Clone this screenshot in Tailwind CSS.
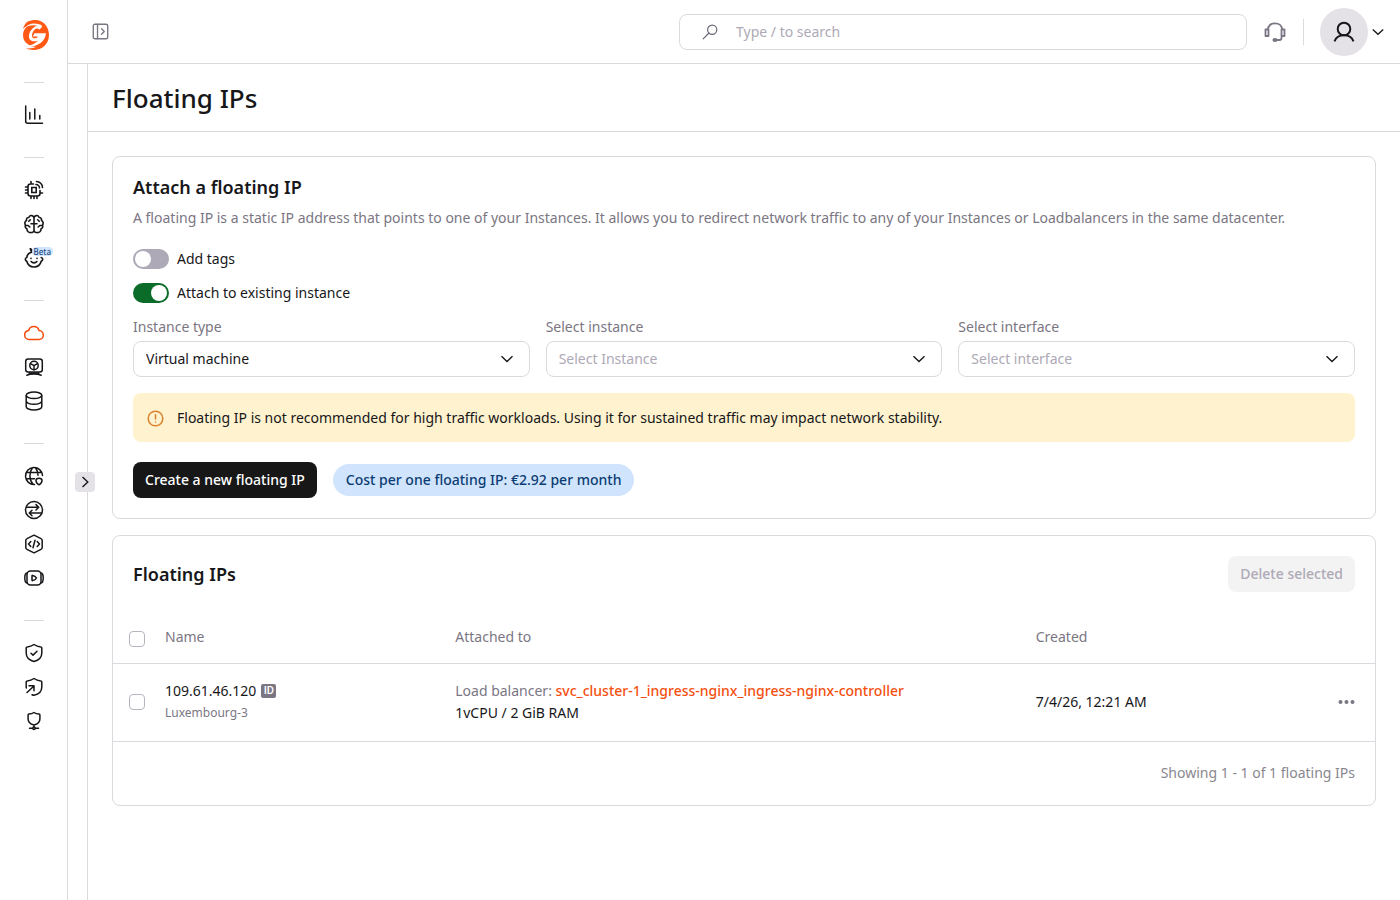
<!DOCTYPE html>
<html lang="en">
	<head>
		<meta charset="UTF-8" />
		<meta name="viewport" content="width=device-width, initial-scale=1.0" />
		<title>Floating IPs</title>
		<script src="https://cdn.jsdelivr.net/npm/@tailwindcss/browser@4"></script>
	</head>
	<body class="flex min-h-screen bg-white font-['Noto_Sans',sans-serif] text-sm leading-5 text-[#17171a]">
		<!-- Sidebar -->
		<nav aria-label="Products" class="flex w-17 shrink-0 flex-col items-center border-r border-[#dadade]">
			<a href="#" aria-label="Home" class="flex h-[82px] items-center pl-1 pb-3">
				<svg class="size-[30px]" viewBox="0 0 30 30">
					<path fill="#ff5913" d="M6 2C9 .500 12 0 14.500 0C22 0 28 6.500 28 15C28 24 21 30 12.500 30C9.500 30 7 29.500 5 28.300C9 28.800 13 28 16 26.500C13 27.300 9.500 26.500 6 23.500C3.500 21.500 2 19 2 15C2 11.500 3.500 8.500 6 6.500C4.500 6.500 3 7.500 2 9C2.500 6.500 4 3.500 6 2Z" />
					<path fill="#fff" d="M4 7.500C8 3 13 2.600 19 4.500C23 6 20 8 18.500 9.500C16 7.500 14 8.500 12.500 11C11 13.500 10.500 16 11.500 17.500C13 19 16 18.500 17 16.500H11.800L13.500 13.200H25C24.500 19.500 19.500 24.500 13 26C10 26.600 7 26.500 5 26C10 25.800 14.500 23.500 17.500 20.500C14 22 10 21.500 8.500 19C7 16 8.500 11.500 11.500 8.500C13 7 15 6 17 5.800C13 4.600 8 5 4 7.500Z" />
				</svg>
			</a>
			<hr class="mb-[15px] w-5 border-[#dadade]" />
			<a href="#" aria-label="Reports" class="flex h-[34px] items-center">
				<svg class="size-5" viewBox="0 0 20 20" fill="none" stroke="currentColor" stroke-width="1.5" stroke-linecap="round"><path d="M1.700 1v15.300a2 2 0 0 0 2 2H18.500M5.800 7.500V14M10.800 4v10M15.800 10.500V14" /></svg>
			</a>
			<hr class="mt-[25px] mb-[15px] w-5 border-[#dadade]" />
			<a href="#" aria-label="Edge AI" class="flex h-[34px] items-center">
				<svg class="size-5" viewBox="0 0 20 20" fill="none" stroke="currentColor" stroke-width="1.6" stroke-linecap="round"><path d="M9.500 4H6.500A2.500 2.500 0 0 0 4 6.500v7A2.500 2.500 0 0 0 6.500 16h7a2.500 2.500 0 0 0 2.500-2.500V10.500M7.800 7.500h4.400v5H7.800zM7 4V1.500M4 7H1.500M4 10H1.500M4 13H1.500M7 16v2.500M10 16v2.500M13 16v2.500M16 13h2.500M12.500 1.500a6 6 0 0 1 6 6M12 4.500a3.500 3.500 0 0 1 3.500 3.500" /></svg>
			</a>
			<a href="#" aria-label="Inference" class="flex h-[34px] items-center">
				<svg class="size-5" viewBox="0 0 20 20" fill="none" stroke="currentColor" stroke-width="1.6" stroke-linecap="round" stroke-linejoin="round"><path d="M10 4A2.600 2.600 0 0 0 5 3.200 2.800 2.800 0 0 0 2.500 6.500 3 3 0 0 0 1.500 11a3 3 0 0 0 1.500 4 3.300 3.300 0 0 0 4 3.500 2.500 2.500 0 0 0 3-2zM10 4A2.600 2.600 0 0 1 15 3.200a2.800 2.800 0 0 1 2.500 3.300A3 3 0 0 1 18.500 11a3 3 0 0 1-1.500 4 3.300 3.300 0 0 1-4 3.500 2.500 2.500 0 0 1-3-2M6.300 5.800 4.800 7.300M13.700 5.800l1.500 1.500M2 11.500h2.200L5.800 13M18 11.500h-2.200L14.200 13M7 9.800h6" /></svg>
			</a>
			<a href="#" aria-label="Everywhere AI" class="relative flex h-[34px] items-center">
				<svg class="size-5" viewBox="0 0 20 20" fill="none" stroke="currentColor" stroke-width="1.600" stroke-linecap="round" stroke-linejoin="round"><path d="M10 4.200C8 4.200 6.500 2.700 6.300.500 8 1.500 8.500 2.500 8 4 5 4.800 3 7 2.800 9.500c-2 .5-2 3 0 3.800C3.700 17 6.500 19 10 19s6.300-2 7.200-5.700c2-.8 2-3.300 0-3.800M7.200 13.500a3.500 3.500 0 0 0 5.600 0M7 10.200v.3M13 10.200v.3" /></svg>
				<span class="absolute top-[6px] left-2 rounded-full bg-[#d1e4fd] px-[2px] text-[8px] leading-[9px] font-medium text-[#1b4b85]">Beta</span>
			</a>
			<hr class="mt-[25px] mb-[15px] w-5 border-[#dadade]" />
			<a href="#" aria-label="Cloud" class="flex h-[34px] items-center text-[#f44a0c]">
				<svg class="size-5" viewBox="0 0 20 20" fill="none" stroke="currentColor" stroke-width="1.5" stroke-linejoin="round"><path d="M4.700 7.500A5.300 5.300 0 0 1 15 7.500a4.600 4.600 0 0 1 4.300 4.700 4.300 4.300 0 0 1-4.300 4.300H5A4.300 4.300 0 0 1 .7 12.200a4.600 4.600 0 0 1 4-4.700z" /></svg>
			</a>
			<a href="#" aria-label="Virtual instances" class="flex h-[34px] items-center">
				<svg class="size-5" viewBox="0 0 20 20" fill="none" stroke="currentColor" stroke-width="1.500" stroke-linecap="round" stroke-linejoin="round"><rect x="1.700" y="2" width="16.600" height="13" rx="2.500" /><circle cx="10" cy="8.500" r="4.200" /><path d="M10 8.700v4M10 8.700 6.600 6.700M10 8.700l3.400-2M2.800 18.300c3.500-1.600 10.900-1.600 14.400 0M5 16h10" /></svg>
			</a>
			<a href="#" aria-label="Storage" class="flex h-[34px] items-center">
				<svg class="size-5" viewBox="0 0 20 20" fill="none" stroke="currentColor" stroke-width="1.500"><ellipse cx="10" cy="4.300" rx="7.800" ry="3.300" /><path d="M2.200 4.300v11.400c0 1.800 3.500 3.300 7.800 3.300s7.800-1.500 7.800-3.300V4.300M2.200 10c0 1.800 3.500 3.300 7.800 3.300s7.800-1.500 7.800-3.300" /></svg>
			</a>
			<hr class="mt-[25px] mb-[15px] w-5 border-[#dadade]" />
			<a href="#" aria-label="DNS" class="flex h-[34px] items-center">
				<svg class="size-5" viewBox="0 0 20 20" fill="none" stroke="currentColor" stroke-width="1.500" stroke-linecap="round" stroke-linejoin="round"><path d="M18.500 9.500A8.500 8.500 0 1 0 10.500 18.500M2.500 6.500h15M2 12.800h8.500M8.500 1.700c-3.500 4.500-3.500 12 .5 16.600M11.500 1.700c1.700 2.300 2.500 4.800 2.500 7.500M15 18.800c-2-1.200-3-2.300-3-4.300 0-1.300 1.400-2.300 3-2.300s3 1 3 2.300c0 2-1 3.100-3 4.300z" /></svg>
			</a>
			<a href="#" aria-label="CDN" class="flex h-[34px] items-center">
				<svg class="size-5" viewBox="0 0 20 20" fill="none" stroke="currentColor" stroke-width="1.500" stroke-linecap="round" stroke-linejoin="round"><circle cx="10" cy="10" r="8.500" /><path d="M2.500 7.300H14.500M12 4.600l2.700 2.700L12 10M17.500 13H5.500M8 10.300 5.300 13 8 15.700" /></svg>
			</a>
			<a href="#" aria-label="FastEdge" class="flex h-[34px] items-center">
				<svg class="size-5" viewBox="0 0 20 20" fill="none" stroke="currentColor" stroke-width="1.500" stroke-linecap="round" stroke-linejoin="round"><path d="M10 1.200 17 4.600a2 2 0 0 1 1.200 1.800v7.200a2 2 0 0 1-1.200 1.800l-7 3.400-7-3.400a2 2 0 0 1-1.200-1.800V6.400A2 2 0 0 1 3 4.600zM6.800 7.500 4.500 10l2.300 2.500M13.200 7.500l2.300 2.500-2.300 2.500M11 6.300 9 13.700" /></svg>
			</a>
			<a href="#" aria-label="Streaming" class="flex h-[34px] items-center">
				<svg class="size-5" viewBox="0 0 20 20" fill="none" stroke="currentColor" stroke-width="1.500" stroke-linecap="round" stroke-linejoin="round"><rect x="3" y="3" width="14" height="14" rx="3.500" /><path d="M3 5C1.200 5.200.8 6.500.8 10S1.200 14.800 3 15M17 5c1.800.2 2.200 1.500 2.200 5s-.4 4.800-2.200 5M8 7.800v4.400c0 .3.300.5.600.4 1.700-.3 3.200-1.300 3.900-2.600-.7-1.300-2.200-2.300-3.900-2.600-.3-.1-.6.100-.6.400z" /></svg>
			</a>
			<hr class="mt-[25px] mb-[15px] w-5 border-[#dadade]" />
			<a href="#" aria-label="WAAP" class="flex h-[34px] items-center">
				<svg class="size-5" viewBox="0 0 20 20" fill="none" stroke="currentColor" stroke-width="1.500" stroke-linecap="round" stroke-linejoin="round"><path d="M10 1.500c2 1.500 4.500 2.300 6.800 2.400a1 1 0 0 1 1 1V10c0 4.300-3.200 7.300-7.800 8.500C5.400 17.300 2.200 14.300 2.200 10V4.900a1 1 0 0 1 1-1C5.500 3.800 8 3 10 1.500zM7 10.300l2 1.800 4-3.800" /></svg>
			</a>
			<a href="#" aria-label="DDoS protection" class="flex h-[34px] items-center">
				<svg class="size-5" viewBox="0 0 20 20" fill="none" stroke="currentColor" stroke-width="1.500" stroke-linecap="round" stroke-linejoin="round"><path d="M2.300 11C2.200 10 2.200 9 2.200 4.900a1 1 0 0 1 1-1C5.500 3.800 8 3 10 1.500c2 1.500 4.500 2.300 6.800 2.400a1 1 0 0 1 1 1V10c0 4.300-3.200 7.300-7.800 8.300-.8-.1-1.500-.4-2-.6M3 15.500l6.500-6M5 8.800h5v5" /></svg>
			</a>
			<a href="#" aria-label="Network security" class="flex h-[34px] items-center">
				<svg class="size-5" viewBox="0 0 20 20" fill="none" stroke="currentColor" stroke-width="1.500" stroke-linecap="round" stroke-linejoin="round"><path d="M10 1.500c1.500 1 3.200 1.500 5 1.600a1 1 0 0 1 .9 1V8c0 3.200-2.300 5.200-5.900 5.900C6.400 13.200 4.100 11.200 4.100 8V4.100a1 1 0 0 1 .9-1c1.800-.1 3.500-.6 5-1.600zM10 14v2M5.500 17.200h3M11.500 17.200h3" /><circle cx="10" cy="17.200" r="1.200" /></svg>
			</a>
		</nav>

		<div class="flex min-w-0 flex-1 flex-col">
			<!-- Top bar -->
			<header class="flex h-16 items-center justify-between border-b border-[#dadade] pr-4 pl-6">
				<button type="button" aria-label="Expand menu" class="text-[#7b7683]">
					<svg class="size-[17px]" viewBox="0 0 16 16" fill="none" stroke="currentColor" stroke-width="1.300" stroke-linecap="round" stroke-linejoin="round"><rect x="1.200" y="1.200" width="13.600" height="13.600" rx="1.500" /><path d="M5.200 1.200v13.600M9 5.500 11.500 8 9 10.500" /></svg>
				</button>
				<div class="flex items-center">
					<label class="flex h-9 w-[568px] items-center rounded-lg border border-[#dadade] pl-[22px]">
						<svg class="size-4 shrink-0 text-[#6b6675]" viewBox="0 0 16 16" fill="none" stroke="currentColor" stroke-width="1.200" stroke-linecap="round"><circle cx="10.200" cy="5.800" r="4.600" /><path d="M7 9 1.200 14.800" /></svg>
						<input type="search" aria-label="Search" placeholder="Type / to search" class="ml-[18px] min-w-0 flex-1 pt-px outline-none placeholder:text-[#aea9b6]" />
					</label>
					<button type="button" aria-label="Support" class="ml-[17px] text-[#7b7683]">
						<svg class="block size-[22px]" viewBox="0 0 22 22" fill="none" stroke="currentColor" stroke-width="1.800" stroke-linejoin="round"><path d="M4 8.500C4 4.800 7 2.300 11 2.300s7 2.500 7 6.200M1.500 8.500H4.500v6.500H1.500zM17.500 8.500h3v6.500h-3zM17.500 15v2c0 1.500-.8 2-2 2H12.500" /><ellipse cx="11" cy="19" rx="1.700" ry="1.200" fill="currentColor" /></svg>
					</button>
					<div class="ml-[17px] h-[26px] w-px bg-[#dadade]"></div>
					<button type="button" aria-label="Account" class="ml-4 flex items-center gap-1">
						<span class="flex size-12 items-center justify-center rounded-full bg-[#e4e1e7]">
							<svg class="size-6" viewBox="0 0 24 24" fill="none" stroke="currentColor" stroke-width="2"><circle cx="12" cy="9" r="6.300" /><path d="M2.500 21.300C4 17 7.500 15.200 12 15.200s8 1.800 9.500 6.100" /></svg>
						</span>
						<svg class="h-3 w-3" viewBox="0 0 12 12" fill="none" stroke="currentColor" stroke-width="1.300"><path d="M.8 3.500 6 8.300l5.200-4.800" /></svg>
					</button>
				</div>
			</header>

			<div class="flex flex-1">
				<!-- Collapsed submenu -->
				<aside class="relative w-5 shrink-0 border-r border-[#dadade]">
					<button type="button" aria-label="Open submenu" class="absolute top-[408px] left-[7px] flex size-5 items-center justify-center rounded bg-[#e4e1e7]">
						<svg class="h-3 w-3" viewBox="0 0 12 12" fill="none" stroke="currentColor" stroke-width="1.400"><path d="M3.500 1 8.800 6 3.500 11" /></svg>
					</button>
				</aside>

				<main class="min-w-0 flex-1">
					<div class="flex h-17 items-center border-b border-[#dadade] px-6">
						<h1 class="text-[26px] leading-8 font-medium">Floating IPs</h1>
					</div>

					<div class="flex flex-col gap-4 p-6">
						<!-- Attach form -->
						<section class="rounded-lg border border-[#dadade] p-5">
							<h2 class="text-lg leading-[21px] font-semibold">Attach a floating IP</h2>
							<p class="mt-[10px] text-[#7b7683]">
								A floating IP is a static IP address that points to one of your Instances. It allows you to redirect network traffic to any of your Instances or Loadbalancers in the same datacenter.
							</p>
							<div class="mt-[21px] flex flex-col items-start gap-[14px]">
								<label class="flex items-center gap-2">
									<input type="checkbox" role="switch" class="h-5 w-9 appearance-none rounded-full bg-[#aea9b6] p-[2px] before:block before:size-4 before:rounded-full before:bg-white checked:bg-[#0b6b28] checked:before:translate-x-4" />
									Add tags
								</label>
								<label class="flex items-center gap-2">
									<input type="checkbox" role="switch" checked class="h-5 w-9 appearance-none rounded-full bg-[#aea9b6] p-[2px] before:block before:size-4 before:rounded-full before:bg-white checked:bg-[#0b6b28] checked:before:translate-x-4" />
									Attach to existing instance
								</label>
							</div>
							<div class="mt-[14px] grid grid-cols-3 gap-4">
								<div>
									<label for="instanceType" class="block text-[#7b7683]">Instance type</label>
									<div class="relative mt-1">
										<select id="instanceType" class="h-9 w-full appearance-none rounded-lg border border-[#dadade] px-3">
											<option>Virtual machine</option>
										</select>
										<svg class="pointer-events-none absolute top-3 right-[17px] size-3" viewBox="0 0 12 12" fill="none" stroke="currentColor" stroke-width="1.400"><path d="M.5 3.300 6 8.500l5.500-5.200" /></svg>
									</div>
								</div>
								<div>
									<label for="instance" class="block text-[#7b7683]">Select instance</label>
									<div class="relative mt-1">
										<select id="instance" class="h-9 w-full appearance-none rounded-lg border border-[#dadade] px-3 text-[#aea9b6]">
											<option>Select Instance</option>
										</select>
										<svg class="pointer-events-none absolute top-3 right-[17px] size-3" viewBox="0 0 12 12" fill="none" stroke="currentColor" stroke-width="1.400"><path d="M.5 3.300 6 8.500l5.500-5.200" /></svg>
									</div>
								</div>
								<div>
									<label for="interface" class="block text-[#7b7683]">Select interface</label>
									<div class="relative mt-1">
										<select id="interface" class="h-9 w-full appearance-none rounded-lg border border-[#dadade] px-3 text-[#aea9b6]">
											<option>Select interface</option>
										</select>
										<svg class="pointer-events-none absolute top-3 right-[17px] size-3" viewBox="0 0 12 12" fill="none" stroke="currentColor" stroke-width="1.400"><path d="M.5 3.300 6 8.500l5.500-5.200" /></svg>
									</div>
								</div>
							</div>
							<div class="mt-4 flex h-[49px] items-center gap-3 rounded-lg bg-[#fff2ce] px-3">
								<svg class="size-5 shrink-0 text-[#d9832f]" viewBox="0 0 20 20" fill="none" stroke="currentColor" stroke-width="1.500" stroke-linecap="round"><circle cx="10.500" cy="10.500" r="7.300" /><path d="M10.500 6.800v4.200M10.500 13.900v.1" /></svg>
								<p>Floating IP is not recommended for high traffic workloads. Using it for sustained traffic may impact network stability.</p>
							</div>
							<div class="mt-5 flex items-center gap-4">
								<button type="button" class="h-9 rounded-lg bg-[#171717] px-3 font-medium text-white">Create a new floating IP</button>
								<span class="rounded-full bg-[#d1e4fd] px-[13px] py-[6px] font-medium text-[#0b3d73]">Cost per one floating IP: €2.92 per month</span>
							</div>
						</section>

						<!-- List -->
						<section class="rounded-lg border border-[#dadade]">
							<div class="flex items-center justify-between p-5">
								<h2 class="text-lg leading-6 font-semibold">Floating IPs</h2>
								<button type="button" disabled class="h-9 rounded-lg bg-[#f3f3f3] px-3 font-medium text-[#aea9b6]">Delete selected</button>
							</div>
							<table class="w-full table-fixed text-left">
								<thead>
									<tr class="h-[51px] border-b border-[#dadade] text-[#7b7683]">
										<th class="w-[52px] pt-1 pl-4"><input type="checkbox" aria-label="Select all" class="block size-4 appearance-none rounded border border-[#b9b5c0]" /></th>
										<th class="w-[23%] font-normal">Name</th>
										<th class="w-[46%] font-normal">Attached to</th>
										<th class="font-normal">Created</th>
										<th class="w-16"></th>
									</tr>
								</thead>
								<tbody>
									<tr class="h-[78px] border-b border-[#dadade]">
										<td class="pl-4"><input type="checkbox" aria-label="Select 109.61.46.120" class="block size-4 appearance-none rounded border border-[#b9b5c0]" /></td>
										<td>
											<div class="flex items-center gap-[5px] leading-[22px]">
												109.61.46.120
												<button type="button" aria-label="Copy ID" class="h-[14px] w-[15px] rounded-xs bg-[#7b7683] font-['Roboto',sans-serif] text-[11px] leading-[14px] font-medium text-white">ID</button>
											</div>
											<div class="text-xs leading-[22px] text-[#7b7683]">Luxembourg-3</div>
										</td>
										<td class="leading-[22px]">
											<div><span class="text-[#7b7683]">Load balancer:</span> <a href="#" class="font-medium text-[#f4500f]">svc_cluster-1_ingress-nginx_ingress-nginx-controller</a></div>
											<div>1vCPU / 2 GiB RAM</div>
										</td>
										<td>7/4/26, 12:21 AM</td>
										<td class="pr-5">
											<button type="button" aria-label="Actions" class="ml-auto block text-[#7b7683]">
												<svg class="h-4 w-[17px]" viewBox="0 0 17 16" fill="currentColor"><circle cx="2.500" cy="8" r="2" /><circle cx="8.500" cy="8" r="2" /><circle cx="14.500" cy="8" r="2" /></svg>
											</button>
										</td>
									</tr>
								</tbody>
							</table>
							<div class="flex h-[63px] items-center justify-end px-5 text-[#8a8790]">Showing 1 - 1 of 1 floating IPs</div>
						</section>
					</div>
				</main>
			</div>
		</div>
	</body>
</html>
